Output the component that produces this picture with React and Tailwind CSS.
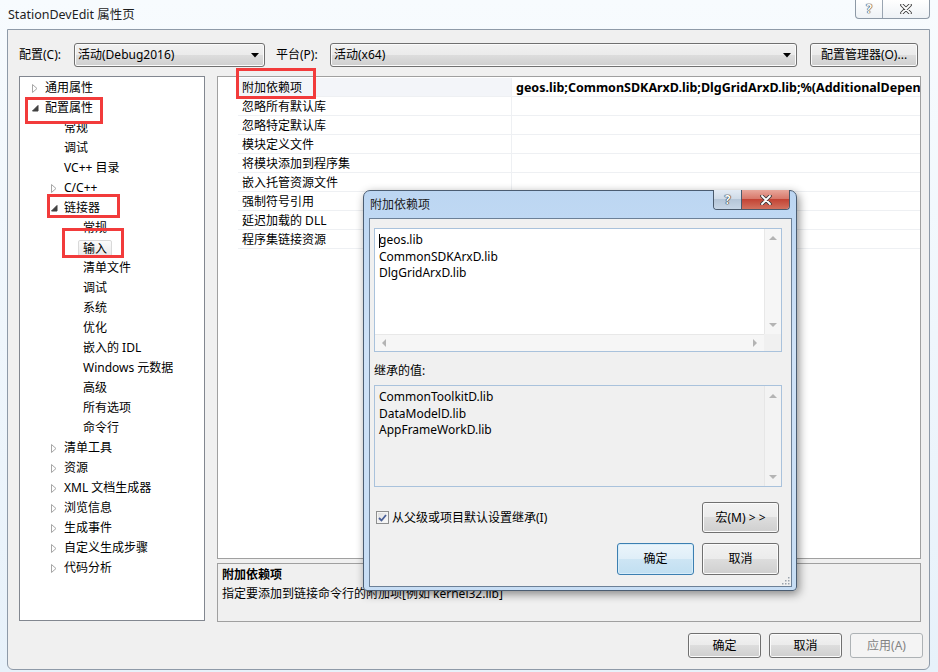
import React from "react";

const tree = [
  { t: "通用属性", l: 0, e: "c" },
  { t: "配置属性", l: 0, e: "o" },
  { t: "常规", l: 1 },
  { t: "调试", l: 1 },
  { t: "VC++ 目录", l: 1 },
  { t: "C/C++", l: 1, e: "c" },
  { t: "链接器", l: 1, e: "o" },
  { t: "常规", l: 2 },
  { t: "输入", l: 2, sel: true },
  { t: "清单文件", l: 2 },
  { t: "调试", l: 2 },
  { t: "系统", l: 2 },
  { t: "优化", l: 2 },
  { t: "嵌入的 IDL", l: 2 },
  { t: "Windows 元数据", l: 2 },
  { t: "高级", l: 2 },
  { t: "所有选项", l: 2 },
  { t: "命令行", l: 2 },
  { t: "清单工具", l: 1, e: "c" },
  { t: "资源", l: 1, e: "c" },
  { t: "XML 文档生成器", l: 1, e: "c" },
  { t: "浏览信息", l: 1, e: "c" },
  { t: "生成事件", l: 1, e: "c" },
  { t: "自定义生成步骤", l: 1, e: "c" },
  { t: "代码分析", l: 1, e: "c" },
];

const props = [
  "附加依赖项",
  "忽略所有默认库",
  "忽略特定默认库",
  "模块定义文件",
  "将模块添加到程序集",
  "嵌入托管资源文件",
  "强制符号引用",
  "延迟加载的 DLL",
  "程序集链接资源",
];

const indent = ["pl-[12px]", "pl-[31px]", "pl-[50px]"];

function Expander({ kind }) {
  if (kind === "c")
    return (
      <svg width="6" height="9" viewBox="0 0 6 9">
        <path d="M0.5 0.5 L5 4.5 L0.5 8.5 Z" fill="#fff" stroke="#a6a6a6" strokeWidth="1" />
      </svg>
    );
  if (kind === "o")
    return (
      <svg width="7" height="7" viewBox="0 0 7 7">
        <path d="M6 0.5 L6 6 L0.5 6 Z" fill="#404040" stroke="#404040" strokeWidth="1" />
      </svg>
    );
  return null;
}

function WinButton({ children, className = "", primary, disabled }) {
  const look = disabled
    ? "border-[#adb2b5] bg-[#f4f4f4] text-[#838383]"
    : primary
    ? "border-[#3c7fb1] bg-[linear-gradient(to_bottom,#ebf5fb_0%,#dfeef8_50%,#cde5f4_50%,#c1dff1_100%)] shadow-[inset_0_0_0_1px_#d6ecf9]"
    : "border-[#707070] bg-[linear-gradient(to_bottom,#f2f2f2_0%,#ebebeb_50%,#dddddd_50%,#cfcfcf_100%)] shadow-[inset_0_0_0_1px_#fbfbfb]";
  return (
    <div className={`flex items-center justify-center rounded-[3px] border ${look} ${className}`}>
      {children}
    </div>
  );
}

function Combo({ text, className = "" }) {
  return (
    <div
      className={`flex h-[24px] items-center justify-between rounded-[3px] border border-[#707070] bg-[linear-gradient(to_bottom,#f2f2f2_0%,#ebebeb_50%,#dddddd_50%,#cfcfcf_100%)] pl-[3px] pr-[5px] shadow-[inset_0_0_0_1px_#fbfbfb] ${className}`}
    >
      <span className="leading-[16px]">{text}</span>
      <svg width="8" height="5" viewBox="0 0 8 5">
        <path d="M0 0 H8 L4 4.5 Z" fill="#000" />
      </svg>
    </div>
  );
}

function Arrow({ dir }) {
  const d = {
    up: "M0 5 L4 1 L8 5 Z",
    down: "M0 1 L4 5 L8 1 Z",
    left: "M5 0 L1 4 L5 8 Z",
    right: "M1 0 L5 4 L1 8 Z",
  }[dir];
  const w = dir === "up" || dir === "down" ? 8 : 6;
  const h = dir === "up" || dir === "down" ? 6 : 8;
  return (
    <svg width={w} height={h} viewBox={`0 0 ${w} ${h}`}>
      <path d={d} fill="#b4b4b4" />
    </svg>
  );
}

function CaptionGlyphX({ size = 12 }) {
  return (
    <svg width={size} height={size - 2} viewBox="0 0 12 10">
      <path d="M2 1 L10 9 M10 1 L2 9" stroke="#3a3a3a" strokeWidth="3.6" strokeLinecap="round" />
      <path d="M2 1 L10 9 M10 1 L2 9" stroke="#ffffff" strokeWidth="1.8" strokeLinecap="round" />
    </svg>
  );
}

export default function App() {
  return (
    <div className="relative h-[672px] w-[938px] overflow-hidden bg-[linear-gradient(to_bottom,#f7fbfe,#e7f1fa)] font-['Noto_Sans','Noto_Sans_CJK_SC',sans-serif] text-[12px] text-black">
      {/* title bar */}
      <div className="flex h-[29px] items-start justify-between">
        <div className="flex h-[29px] items-center pl-[8px] text-[12.5px] leading-[16px] text-[#1e1e1e]">StationDevEdit 属性页</div>
        <div className="mr-[8px] flex h-[19px] overflow-hidden rounded-b-[4px] border border-t-0 border-[#8d99a6] bg-[linear-gradient(to_bottom,#ffffff,#eef2f6)]">
          <div className="flex w-[27px] items-center justify-center border-r border-[#9aa5b1] text-[12px] font-bold leading-[12px] text-white [text-shadow:0_0_1px_#333,0_0_1px_#333,0_0_1px_#333]">
            ?
          </div>
          <div className="flex w-[46px] items-center justify-center">
            <CaptionGlyphX />
          </div>
        </div>
      </div>

      {/* client area */}
      <div className="ml-[7px] flex h-[641px] w-[923px] flex-col rounded-b-[6px] border border-[#8e9aa8] bg-[#f0f0f0]">
        {/* config row */}
        <div className="mt-[13px] flex h-[24px] items-center pl-[11px]">
          <span className="w-[55px] leading-[16px]">配置(C):</span>
          <Combo text="活动(Debug2016)" className="w-[191px]" />
          <span className="ml-[11px] w-[54px] leading-[16px]">平台(P):</span>
          <Combo text="活动(x64)" className="w-[467px]" />
          <WinButton className="ml-[13px] h-[24px] w-[108px]">
            <span className="leading-[16px]">配置管理器(O)...</span>
          </WinButton>
        </div>

        {/* main area */}
        <div className="mt-[9px] flex pl-[11px]">
          {/* tree */}
          <div className="h-[545px] w-[186px] border border-[#828790] bg-white pt-[1px]">
            {tree.map((n, i) => (
              <div key={i} className={`flex h-[20px] items-center ${indent[n.l]}`}>
                <div className="flex w-[13px] items-center">
                  <Expander kind={n.e} />
                </div>
                {n.sel ? (
                  <span className="-ml-[5px] rounded-[2px] border border-[#d9d9d9] bg-[linear-gradient(to_bottom,#fbfbfb,#e8e8e8)] px-[4px] leading-[15px]">
                    {n.t}
                  </span>
                ) : (
                  <span className="leading-[16px]">{n.t}</span>
                )}
              </div>
            ))}
          </div>

          {/* right side */}
          <div className="ml-[12px] flex w-[704px] flex-col">
            <div className="h-[483px] border border-[#a0a0a0] bg-white pt-[1px]">
              {props.map((p, i) => (
                <div key={i} className="flex h-[19px]">
                  <div className="w-[20px] bg-[#ffffff]" />
                  <div
                    className={`flex w-[274px] items-center border-b border-r border-[#eef0f3] pl-[4px] pt-[1px] ${
                      i === 0 ? "bg-[#f3f5f9]" : ""
                    }`}
                  >
                    <span className="leading-[16px]">{p}</span>
                  </div>
                  <div className="flex min-w-0 flex-1 items-center overflow-hidden border-b border-[#eef0f3] pl-[4px] pt-[1px]">
                    {i === 0 && (
                      <span className="whitespace-nowrap text-[12.5px] font-bold leading-[16px]">
                        geos.lib;CommonSDKArxD.lib;DlgGridArxD.lib;%(AdditionalDependencies)
                      </span>
                    )}
                  </div>
                </div>
              ))}
            </div>
            <div className="mt-[4px] h-[59px] border border-[#a0a0a0] bg-[#f0f0f0] pl-[4px] pt-[1px]">
              <div className="h-[19px] font-bold leading-[19px]">附加依赖项</div>
              <div className="h-[19px] leading-[19px]">指定要添加到链接命令行的附加项[例如 kernel32.lib]</div>
            </div>
          </div>
        </div>

        {/* bottom buttons */}
        <div className="mt-[11px] flex justify-end gap-[8px] pr-[6px]">
          <WinButton className="h-[25px] w-[73px]">
            <span className="leading-[16px]">确定</span>
          </WinButton>
          <WinButton className="h-[25px] w-[73px]">
            <span className="leading-[16px]">取消</span>
          </WinButton>
          <WinButton disabled className="h-[25px] w-[73px]">
            <span className="leading-[16px]">应用(A)</span>
          </WinButton>
        </div>
      </div>

      {/* red annotation boxes */}
      <div className="absolute left-[25px] top-[97px] h-[27px] w-[78px] border-[3px] border-[#f23b3b]" />
      <div className="absolute left-[47px] top-[194px] h-[24px] w-[73px] border-[3px] border-[#f23b3b]" />
      <div className="absolute left-[62px] top-[228px] h-[30px] w-[62px] border-[3px] border-[#f23b3b]" />
      <div className="absolute left-[236px] top-[68px] h-[31px] w-[80px] border-[3px] border-[#f23b3b]" />

      {/* modal dialog */}
      <div className="absolute left-[363px] top-[190px] flex h-[401px] w-[434px] flex-col rounded-b-[4px] rounded-t-[7px] border border-[#4b5d72] bg-[linear-gradient(to_bottom,#bcd6f2_0%,#cfe2f7_40%,#c7ddf4_100%)] shadow-[2px_3px_10px_rgba(0,0,0,0.45)]">
        <div className="flex h-[27px] items-start justify-between">
          <div className="flex h-[27px] items-center pl-[6px] leading-[16px] text-[#1a1a1a]">附加依赖项</div>
          <div className="-mt-[1px] mr-[6px] flex h-[20px] overflow-hidden rounded-b-[4px] border border-t-0 border-[#4a5a6c]">
            <div className="flex w-[28px] items-center justify-center border-r border-[#4a5a6c] bg-[linear-gradient(to_bottom,#e3ebf4_0%,#cdd9e6_50%,#b5c6d8_50%,#c7d6e6_100%)] text-[12px] font-bold leading-[12px] text-white [text-shadow:0_0_1px_#222,0_0_1px_#222,0_0_1px_#222]">
              ?
            </div>
            <div className="flex w-[47px] items-center justify-center bg-[linear-gradient(to_bottom,#e8a79b_0%,#d8796b_45%,#c34435_50%,#d2715e_100%)]">
              <CaptionGlyphX />
            </div>
          </div>
        </div>
        <div className="relative ml-[5px] mr-[4px] h-[369px] border border-[#6c8097] bg-[#f0f0f0] pl-[4px] pr-[9px]">
          {/* textbox 1 */}
          <div className="mt-[9px] flex h-[124px] flex-col border border-[#a9c2dc] bg-white">
            <div className="flex min-h-0 flex-1">
              <div className="relative flex-1 pl-[4px] pt-[3px] leading-[16.5px]">
                <div className="absolute left-[4px] top-[5px] h-[14px] w-[1px] bg-black" />
                <div>geos.lib</div>
                <div>CommonSDKArxD.lib</div>
                <div>DlgGridArxD.lib</div>
              </div>
              <div className="flex w-[17px] flex-col items-center justify-between border-l border-[#e8e8e8] bg-[#f6f6f6] pb-[6px] pt-[6px]">
                <Arrow dir="up" />
                <Arrow dir="down" />
              </div>
            </div>
            <div className="flex h-[17px]">
              <div className="flex flex-1 items-center justify-between border-t border-[#e8e8e8] bg-[#f6f6f6] pl-[6px] pr-[6px]">
                <Arrow dir="left" />
                <Arrow dir="right" />
              </div>
              <div className="w-[17px] bg-[#f0f0f0]" />
            </div>
          </div>

          <div className="mt-[11px] h-[16px] leading-[16px]">继承的值:</div>

          {/* textbox 2 */}
          <div className="mt-[6px] flex h-[102px] border border-[#a9c2dc] bg-[#f0f0f0]">
            <div className="flex-1 pl-[4px] pt-[3px] leading-[16.5px]">
              <div>CommonToolkitD.lib</div>
              <div>DataModelD.lib</div>
              <div>AppFrameWorkD.lib</div>
            </div>
            <div className="flex w-[17px] flex-col items-center justify-between border-l border-[#e6e6e6] bg-[#f3f3f3] pb-[6px] pt-[7px]">
              <Arrow dir="up" />
              <Arrow dir="down" />
            </div>
          </div>

          {/* checkbox + macro */}
          <div className="mt-[15px] flex h-[31px] items-center justify-between">
            <div className="ml-[2px] flex items-center">
              <div className="flex h-[13px] w-[13px] items-center justify-center border border-[#8e8f8f] bg-[linear-gradient(135deg,#dcdcdc,#fdfdfd)] shadow-[inset_0_0_0_1px_#f4f4f4]">
                <svg width="9" height="8" viewBox="0 0 9 8">
                  <path d="M1 4 L3.5 6.5 L8 1" fill="none" stroke="#4a5f97" strokeWidth="1.8" />
                </svg>
              </div>
              <span className="ml-[3px] leading-[16px]">从父级或项目默认设置继承(I)</span>
            </div>
            <WinButton className="mr-[3px] h-[31px] w-[77px]">
              <span className="leading-[16px]">宏(M) &gt; &gt;</span>
            </WinButton>
          </div>

          {/* ok / cancel */}
          <div className="mt-[10px] flex justify-end gap-[8px] pr-[3px]">
            <WinButton primary className="h-[32px] w-[77px]">
              <span className="leading-[16px]">确定</span>
            </WinButton>
            <WinButton className="h-[32px] w-[77px]">
              <span className="leading-[16px]">取消</span>
            </WinButton>
          </div>

          {/* resize grip */}
          <svg className="absolute bottom-[1px] right-[1px]" width="10" height="10" viewBox="0 0 10 10">
            {[
              [8, 2], [8, 5], [5, 5], [8, 8], [5, 8], [2, 8],
            ].map(([x, y], i) => (
              <rect key={i} x={x} y={y} width="1.5" height="1.5" fill="#9aa3ad" />
            ))}
          </svg>
        </div>
      </div>
    </div>
  );
}
